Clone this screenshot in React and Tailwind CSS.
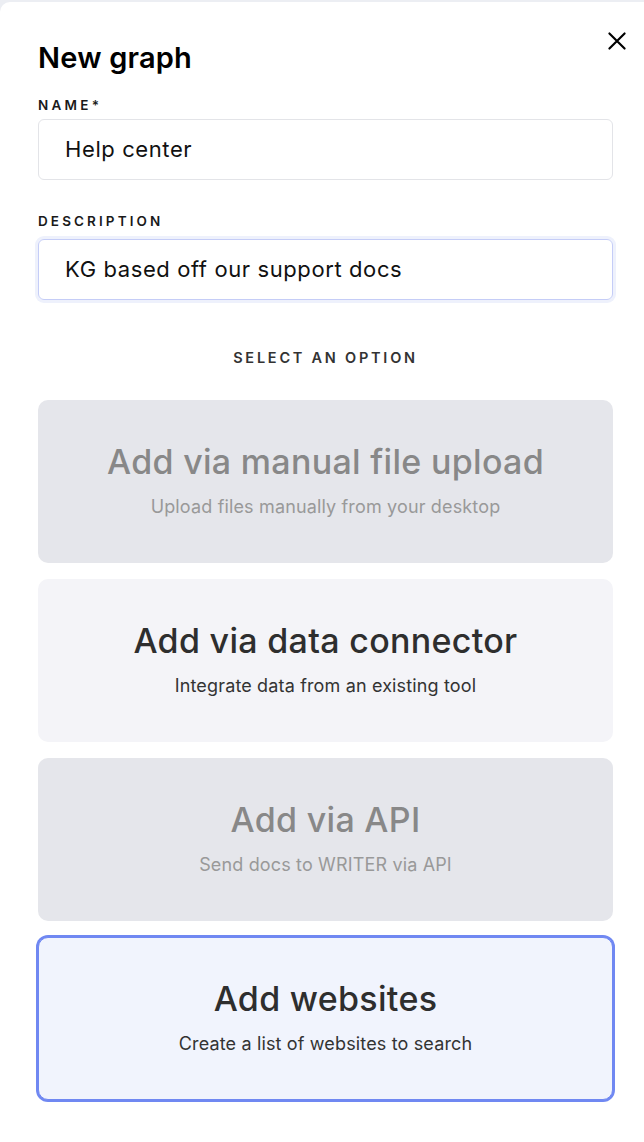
import React from 'react';

const options = [
  { title: 'Add via manual file upload', desc: 'Upload files manually from your desktop', variant: 'disabled' },
  { title: 'Add via data connector', desc: 'Integrate data from an existing tool', variant: 'default' },
  { title: 'Add via API', desc: 'Send docs to WRITER via API', variant: 'disabled' },
  { title: 'Add websites', desc: 'Create a list of websites to search', variant: 'selected' },
];

const cardClass = {
  disabled: 'bg-[#e5e6eb] text-[#888888]',
  default: 'bg-[#f4f4f8] text-[#2e2e2e]',
  selected: 'bg-[#f1f4fd] text-[#2e2e2e] border border-[#7088f2] ring-2 ring-[#7088f2]',
};

const descClass = {
  disabled: 'text-[#999999]',
  default: 'text-[#333333]',
  selected: 'text-[#333333]',
};

const OptionCard = ({ title, desc, variant }) => (
  <button
    type="button"
    className={`h-[163px] w-full rounded-[10px] flex flex-col items-center justify-center text-center pb-[3px] ${cardClass[variant]}`}
  >
    <span className="text-[34px] leading-[40px] font-medium tracking-[0.3px]">{title}</span>
    <span className={`mt-[13px] text-[18px] leading-[24px] tracking-[0.15px] ${descClass[variant]}`}>{desc}</span>
  </button>
);

export default function App() {
  return (
    <div className="min-h-screen bg-[#eceef3] pt-[2px]" style={{ fontFamily: 'Inter, "Noto Sans", sans-serif' }}>
      <div className="relative bg-white rounded-tl-[10px] min-h-[1140px] pl-[38px] pr-[31px] pt-[39px] pb-[36px]">
        <button type="button" className="absolute right-[14px] top-[26px] text-black" aria-label="Close">
          <svg width="26" height="26" viewBox="0 0 24 24" fill="none" stroke="currentColor" strokeWidth="2" strokeLinecap="round">
            <path d="M5 5L19 19M19 5L5 19" />
          </svg>
        </button>

        <h1 className="text-[29px] leading-[34px] font-semibold text-black tracking-[0.2px]">New graph</h1>

        <label className="block mt-[22px] text-[13.5px] leading-[16px] font-semibold tracking-[0.24em] text-[#1a1a1a]">NAME*</label>
        <div className="mt-[6px] h-[61px] rounded-[6px] border border-[#e3e4e8] flex items-center pl-[26px] text-[22px] tracking-[0.6px] text-[#111]">
          Help center
        </div>

        <label className="block mt-[33px] text-[13.5px] leading-[16px] font-semibold tracking-[0.23em] text-[#1a1a1a]">DESCRIPTION</label>
        <div className="mt-[10px] h-[61px] rounded-[6px] border border-[#c5cdf7] ring-[3px] ring-[#eef1fc] flex items-center pl-[26px] text-[22px] tracking-[0.6px] text-[#111]">
          KG based off our support docs
        </div>

        <p className="mt-[49px] text-center text-[14.5px] leading-[18px] font-semibold tracking-[0.19em] text-[#333]">SELECT AN OPTION</p>

        <div className="mt-[33px] flex flex-col gap-[16px]">
          {options.map((o) => (
            <OptionCard key={o.title} {...o} />
          ))}
        </div>
      </div>
    </div>
  );
}
